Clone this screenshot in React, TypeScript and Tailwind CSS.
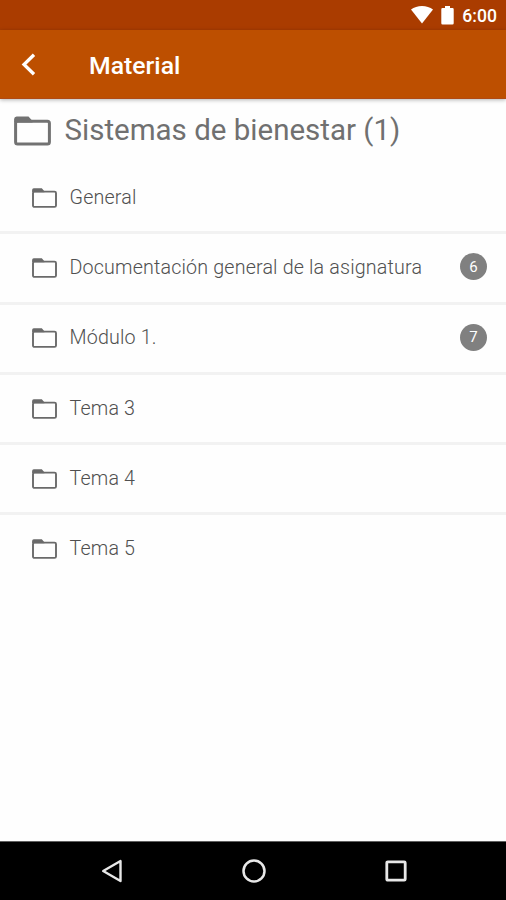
const folders = [
  { name: "General", count: 0 },
  { name: "Documentación general de la asignatura", count: 6 },
  { name: "Módulo 1.", count: 7 },
  { name: "Tema 3", count: 0 },
  { name: "Tema 4", count: 0 },
  { name: "Tema 5", count: 0 },
]

function FolderLarge() {
  return (
    <svg className="w-[37px] h-[30px] shrink-0" viewBox="0 0 37 30" fill="none">
      <rect x="1.6" y="5.2" width="33.8" height="22.8" rx="2" stroke="#727272" strokeWidth="3" />
      <path d="M3 .5h11.5l4 4.5v1.5H.1V3A2.7 2.7 0 0 1 3 .5Z" fill="#727272" />
    </svg>
  )
}

function FolderSmall() {
  return (
    <svg className="w-[25px] h-[20px] shrink-0" viewBox="0 0 25 20" fill="none">
      <rect x="1" y="3.6" width="23" height="15.3" rx="1.5" stroke="#6a6a6a" strokeWidth="1.9" />
      <path d="M2 .3h7.8l2.6 3v1H.1V2A1.8 1.8 0 0 1 2 .3Z" fill="#6a6a6a" />
    </svg>
  )
}

function StatusBar() {
  return (
    <div className="h-[30px] shrink-0 bg-[#aa3c00] flex items-start justify-end pr-[9px] text-white">
      <svg className="w-[22px] h-[18px] mt-[6px]" viewBox="0 0 22 18" fill="currentColor">
        <path d="M0 3.6C3 1.3 6.8 0 11 0s8 1.3 11 3.6L11 17.5Z" />
      </svg>
      <svg className="w-[13px] h-[19px] mt-[6px] ml-[8px]" viewBox="0 0 13 19" fill="currentColor">
        <path d="M4 0h5v2h2.5a1.2 1.2 0 0 1 1.2 1.2v14.1a1.2 1.2 0 0 1-1.2 1.2h-10a1.2 1.2 0 0 1-1.2-1.2V3.2A1.2 1.2 0 0 1 1.5 2H4Z" />
      </svg>
      <span className="ml-[8px] mt-[6px] text-[17.6px] leading-[20px] font-medium">6:00</span>
    </div>
  )
}

export default function App() {
  return (
    <div className="w-[506px] h-[900px] overflow-hidden flex flex-col bg-[#fefefe] font-['Roboto',sans-serif]">
      <StatusBar />

      <header className="relative h-[69px] shrink-0 bg-[#bd4f00] flex items-center pl-[21px] border-b border-[#b04a14] shadow-[0_1px_4px_rgba(0,0,0,0.3)]">
        <svg className="w-[15px] h-[23px]" viewBox="0 0 15 23" fill="none">
          <path d="M13 1.7 3 11.5 13 21.3" stroke="white" strokeWidth="3.3" />
        </svg>
        <h1 className="ml-[53px] mt-[4px] text-[24.8px] leading-[30px] font-medium text-white">Material</h1>
      </header>

      <main className="flex-1">
        <div className="h-[65px] flex items-center pl-[14px] pb-[2px]">
          <FolderLarge />
          <h2 className="ml-[13.5px] -mt-[2px] text-[29.5px] leading-[36px] text-[#707070]">Sistemas de bienestar (1)</h2>
        </div>

        <ul>
          {folders.map((folder) => (
            <li
              key={folder.name}
              className="h-[70.3px] flex items-center pl-[32px] pr-[19px] border-b-[3px] border-[#f2f2f2] last:border-transparent"
            >
              <FolderSmall />
              <span className="ml-[12.5px] text-[19.7px] leading-[24px] font-light tracking-[0.16px] text-[#505050]">
                {folder.name}
              </span>
              {folder.count > 0 && (
                <span className="ml-auto -mt-[2px] size-[27px] rounded-full bg-[#808080] flex items-center justify-center text-[15px] text-white">
                  {folder.count}
                </span>
              )}
            </li>
          ))}
        </ul>
      </main>

      <nav className="h-[59px] shrink-0 bg-black border-t border-[#606060] flex items-center pl-[101px] text-[#e8e8e8]">
        <svg className="w-[22px] h-[24px]" viewBox="0 0 22 24" fill="none" stroke="currentColor" strokeWidth="2.4">
          <path d="M19.5 2v20L2.2 12Z" strokeLinejoin="round" />
        </svg>
        <svg className="w-[24px] h-[24px] ml-[119px]" viewBox="0 0 24 24" fill="none" stroke="currentColor" strokeWidth="2.5">
          <circle cx="12" cy="12" r="10.5" />
        </svg>
        <svg className="w-[22px] h-[22px] ml-[119px]" viewBox="0 0 22 22" fill="none" stroke="currentColor" strokeWidth="2.8">
          <rect x="1.8" y="1.8" width="18.4" height="18.4" rx="1" />
        </svg>
      </nav>
    </div>
  )
}
